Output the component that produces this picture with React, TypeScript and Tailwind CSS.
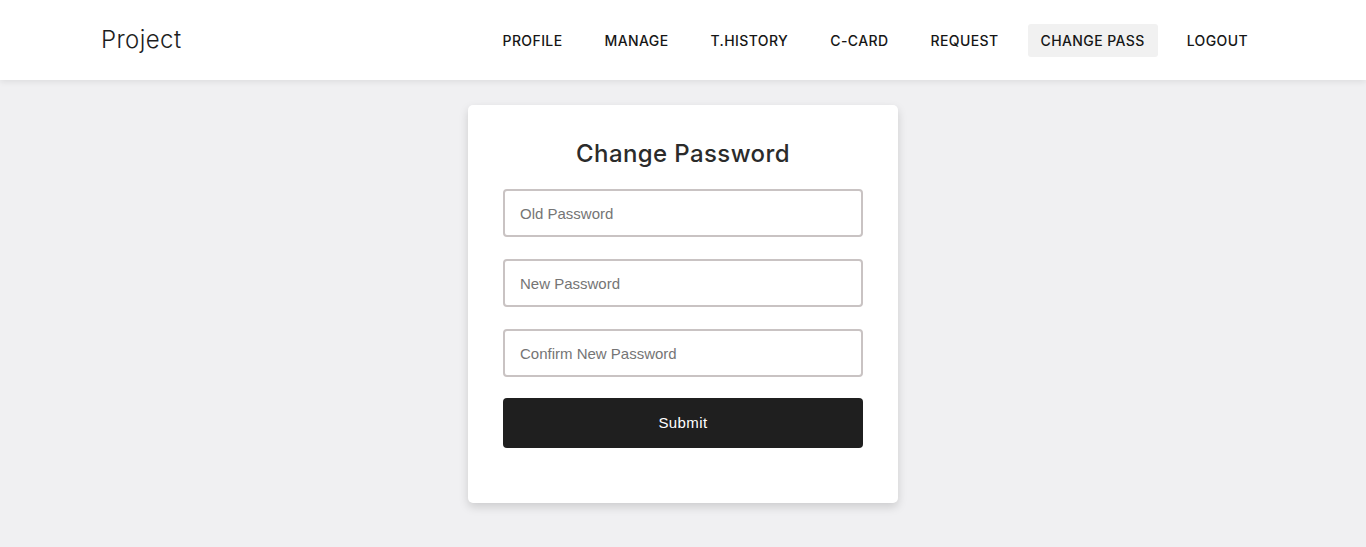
export default function App() {
  const links = ["PROFILE", "MANAGE", "T.HISTORY", "C-CARD", "REQUEST", "CHANGE PASS", "LOGOUT"];
  const fields = ["Old Password", "New Password", "Confirm New Password"];

  return (
    <div className="flex min-h-[547px] flex-col bg-[#f0f0f2] font-['Inter',sans-serif]">
      <header className="relative z-10 h-20 bg-white shadow-[0_2px_6px_rgba(0,0,0,0.08)]">
        <div className="flex h-full items-center justify-between pl-[101px] pr-[105px]">
          <div className="text-[24px] font-light tracking-[0.4px] text-[#1e1e1e]">Project</div>
          <nav className="flex items-center gap-4">
            {links.map((link) => (
              <a
                key={link}
                href="#"
                className={
                  "rounded-[3px] px-[13px] py-[6px] text-[14px] font-medium tracking-[0.4px] text-[#161616] " +
                  (link === "CHANGE PASS" ? "bg-[#f1f1f1]" : "")
                }
              >
                {link}
              </a>
            ))}
          </nav>
        </div>
      </header>

      <main className="flex flex-1 justify-center pt-[25px] pb-11">
        <div className="h-[398px] w-[430px] rounded-[5px] bg-white px-[35px] pt-[33px] shadow-[0_4px_10px_rgba(0,0,0,0.15)]">
          <h1 className="text-center text-[24px] leading-8 font-medium tracking-[0.4px] text-[#2b2b2b]">
            Change Password
          </h1>
          <form className="mt-[19px] flex flex-col gap-[22px]">
            {fields.map((f) => (
              <input
                key={f}
                type="password"
                placeholder={f}
                className="h-12 w-full rounded-[4px] border-2 border-[#c9c3c3] bg-white px-[15px] font-['Liberation_Sans',Arial,sans-serif] text-[15px] text-[#333] outline-none placeholder:text-[#757575]"
              />
            ))}
            <button
              type="button"
              className="-mt-px h-[50px] w-full rounded-[4px] bg-[#1f1f1f] font-['Liberation_Sans',Arial,sans-serif] text-[15px] tracking-[0.4px] text-white"
            >
              Submit
            </button>
          </form>
        </div>
      </main>
    </div>
  );
}
